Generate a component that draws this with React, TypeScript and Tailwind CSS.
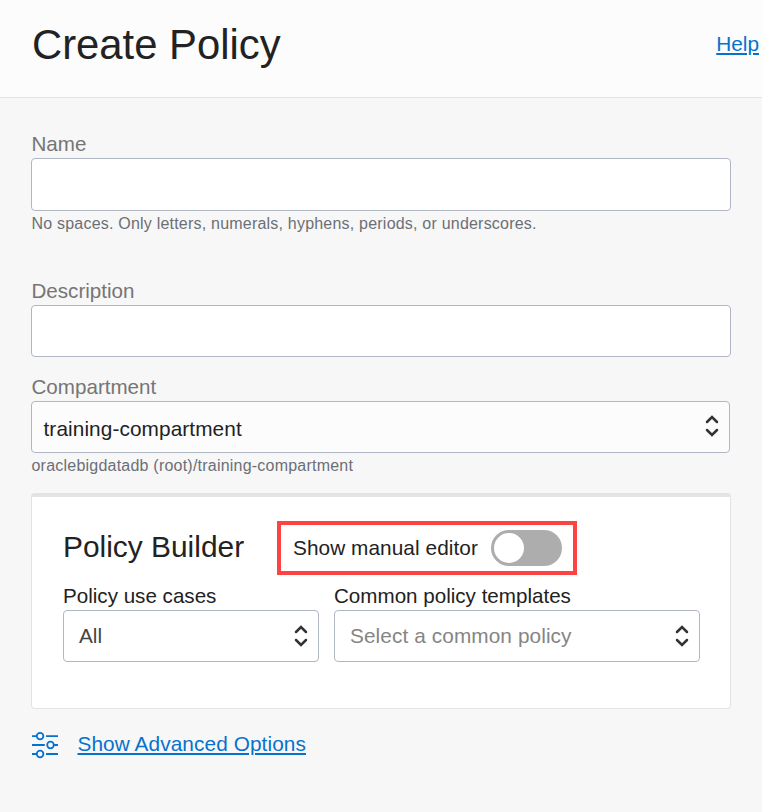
function UpDown({ className = "" }: { className?: string }) {
  return (
    <svg className={className} width="14" height="24" viewBox="0 0 14 24" fill="none" stroke="#333" strokeWidth="2.5" strokeLinecap="round">
      <path d="M2 8 L7 3 L12 8" />
      <path d="M2 16 L7 21 L12 16" />
    </svg>
  );
}

function OptionsIcon() {
  return (
    <svg width="28" height="28" viewBox="0 0 28 28" fill="none" stroke="#0572ce" strokeWidth="1.8">
      <path d="M1 5.1H5.5M15 5.1H27M1 14H13.8M23 14H27M1 23H5.5M15 23H27" />
      <circle cx="9.1" cy="5.1" r="3.3" />
      <circle cx="19.5" cy="14" r="3.3" />
      <circle cx="9.1" cy="23" r="3.3" />
    </svg>
  );
}

export default function App() {
  return (
    <div className="h-[812px] w-[762px] overflow-hidden bg-[#f7f7f7] font-['Liberation_Sans',Arial,sans-serif] text-[20.8px] leading-6 whitespace-nowrap text-[#222]">
      <header className="flex h-[98px] items-start justify-between border-b border-[#e3e3e3] bg-[#fcfcfc] pr-[3px] pl-8">
        <h1 className="mt-[21px] text-[41.8px] leading-[48px]">Create Policy</h1>
        <a href="#" className="mt-8 text-[#0572ce] underline decoration-2 underline-offset-2">Help</a>
      </header>

      <main className="flex flex-col pr-[31px] pl-[31px]">
        <label className="mt-[34px] h-[26px] pl-[0.5px] text-[20.6px] text-[#757575]">Name</label>
        <input className="h-[53px] rounded-[4px] border border-[#b0b7c3] bg-white px-3 outline-none" />
        <p className="mt-[3px] h-5 pl-[0.5px] text-[16px] leading-5 tracking-[0.21px] text-[#6b6f76]">
          No spaces. Only letters, numerals, hyphens, periods, or underscores.
        </p>

        <label className="mt-[45px] h-[26px] pl-[0.5px] text-[20.6px] text-[#757575]">Description</label>
        <input className="h-[52px] rounded-[4px] border border-[#b0b7c3] bg-white px-3 outline-none" />

        <label className="mt-[18px] h-[26px] pl-[0.5px] text-[20.6px] text-[#757575]">Compartment</label>
        <button className="mr-px flex h-[52px] items-center justify-between rounded-[4px] border border-[#b0b7c3] bg-[#fcfcfc] pt-[3px] pr-[10px] pl-[11.5px]">
          <span className="tracking-[0.09px]">training-compartment</span>
          <UpDown className="mb-[5px]" />
        </button>
        <p className="mt-[3px] h-5 pl-[0.5px] text-[16px] leading-5 tracking-[0.22px] text-[#6b6f76]">oraclebigdatadb (root)/training-compartment</p>

        <section className="mt-[17px] h-[216px] rounded-[4px] border border-t-4 border-[#e2e3e7] bg-white pr-[30px] pl-[31px]">
          <div className="flex pt-6">
            <h2 className="mt-2 w-[214px] text-[29.9px] leading-9">Policy Builder</h2>
            <div className="flex h-[54px] w-[300px] items-center justify-between border-4 border-[#fe4343] pr-[11px] pl-3">
              <span className="tracking-[0.06px]">Show manual editor</span>
              <button aria-label="Show manual editor" className="flex h-9 w-[71px] items-center rounded-full bg-[#adadad] pl-[3px]">
                <span className="size-[30px] rounded-full bg-white" />
              </button>
            </div>
          </div>
          <div className="mt-[9px] flex gap-[15px]">
            <div className="flex w-64 flex-col">
              <label className="h-[26px] text-[20.6px]">Policy use cases</label>
              <button className="flex h-[52px] items-center justify-between rounded-[4px] border border-[#b0b7c3] pr-[10.5px] pl-[15px] text-[#444]">
                <span>All</span>
                <UpDown />
              </button>
            </div>
            <div className="flex w-[366px] flex-col">
              <label className="h-[26px] text-[20.6px]">Common policy templates</label>
              <button className="flex h-[52px] items-center justify-between rounded-[4px] border border-[#b0b7c3] pr-[10.5px] pl-[15px] text-[#858585]">
                <span className="tracking-[0.09px]">Select a common policy</span>
                <UpDown />
              </button>
            </div>
          </div>
        </section>

        <div className="mt-[22px] flex items-start gap-[18px]">
          <OptionsIcon />
          <a href="#" className="mt-px pl-[0.5px] tracking-[0.09px] text-[#0572ce] underline decoration-2 underline-offset-2">Show Advanced Options</a>
        </div>
      </main>
    </div>
  );
}
